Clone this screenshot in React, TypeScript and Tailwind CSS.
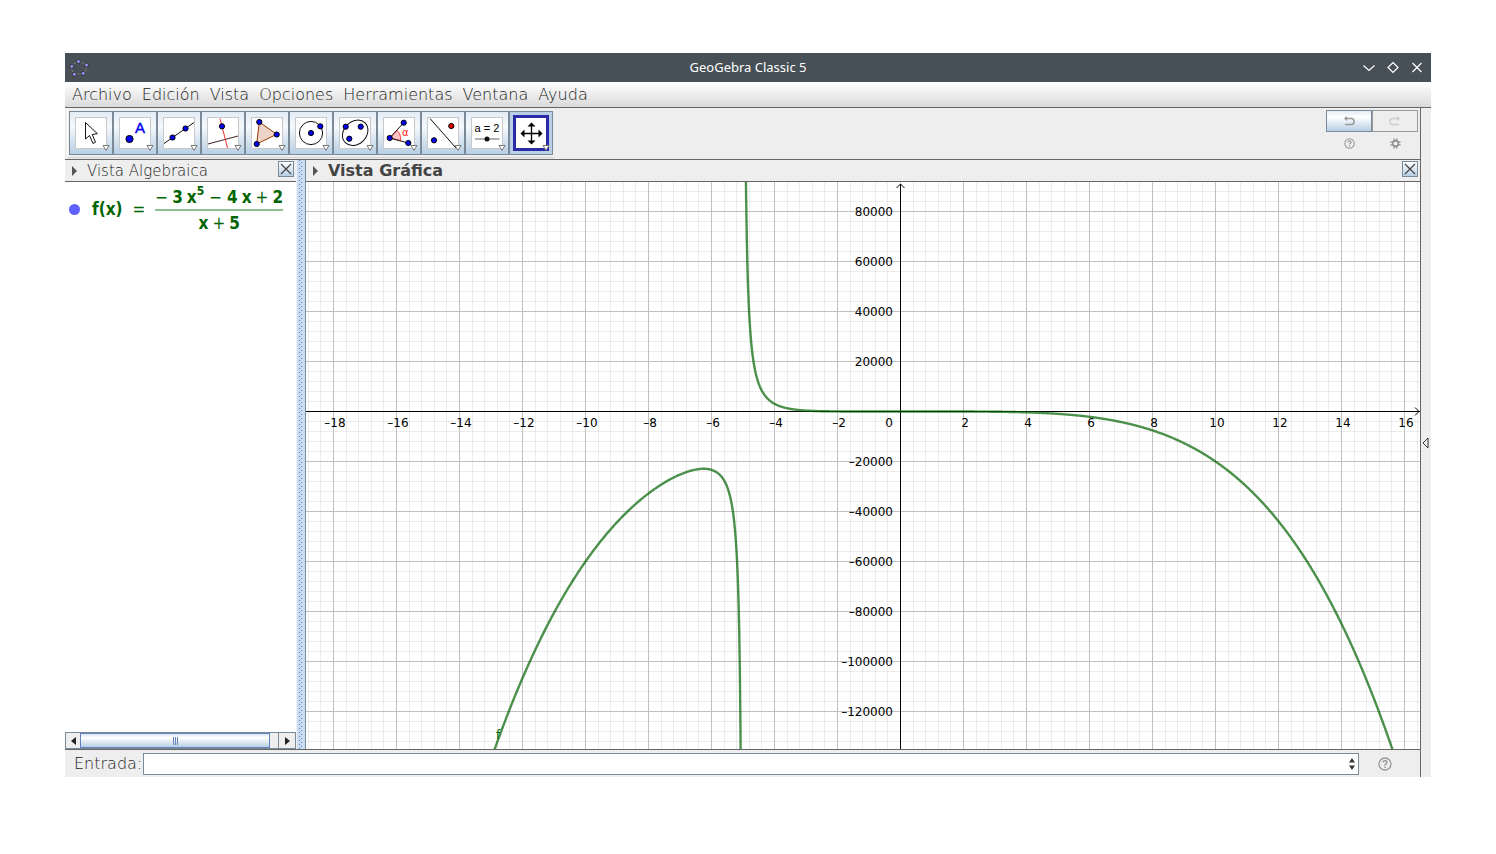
import type { ReactNode } from "react";

const MENUS = ["Archivo", "Edición", "Vista", "Opciones", "Herramientas", "Ventana", "Ayuda"];

// Plot scale: pixels per unit, and where the origin sits inside the view
const UNIT_X = 31.5;
const UNIT_Y = 50 / 20000;
const ORIGIN_X = 594.5;
const ORIGIN_Y = 229.5;
const PLOT_HEIGHT = 567;

const f = (x: number) => (-3 * x ** 5 - 4 * x + 2) / (x + 5);

function range(from: number, to: number, step = 1) {
  const out: number[] = [];
  for (let i = from; i <= to; i += step) out.push(i);
  return out;
}

function curve(from: number, to: number) {
  const points: string[] = [];
  const steps = Math.round((to - from) / 0.02);
  for (let i = 0; i <= steps; i++) {
    const x = from + ((to - from) * i) / steps;
    const y = ORIGIN_Y - f(x) * UNIT_Y;
    if (y > -400 && y < PLOT_HEIGHT + 400) {
      points.push(`${(ORIGIN_X + x * UNIT_X).toFixed(2)},${y.toFixed(2)}`);
    }
  }
  return points.join(" ");
}

const xTicks = range(-18, 16, 2);
const yTicks = range(-120000, 80000, 20000);
const label = (n: number) => (n < 0 ? `–${-n}` : `${n}`);

function Dot({ x, y, r = 2.6, color = "#0000f5" }: { x: number; y: number; r?: number; color?: string }) {
  return <circle cx={x} cy={y} r={r} fill={color} stroke="#000" strokeWidth="1" />;
}

const TOOLS: { name: string; icon: ReactNode }[] = [
  {
    name: "Elige y mueve",
    icon: <path d="M16.5 11.5V28l4-3.5 3.5 8 2.5-1.3-3.3-7.7 5.2-.8z" fill="#fff" stroke="#111" />,
  },
  {
    name: "Punto",
    icon: (
      <>
        <Dot x={16.5} y={28} r={3.6} />
        <text x="22" y="21.5" fontSize="15" fill="#0000f0" stroke="#0000f0" strokeWidth="0.4" className="font-['Liberation_Sans',sans-serif]">A</text>
      </>
    ),
  },
  {
    name: "Recta",
    icon: (
      <>
        <path d="M7 32.5L37 11.5" stroke="#111" />
        <Dot x={15.5} y={26.5} />
        <Dot x={28.5} y={17.5} />
      </>
    ),
  },
  {
    name: "Perpendicular",
    icon: (
      <>
        <path d="M7 33L37 25" stroke="#402020" />
        <path d="M19 7.5L26.5 37" stroke="#f03030" />
        <Dot x={21} y={15.3} />
      </>
    ),
  },
  {
    name: "Polígono",
    icon: (
      <>
        <path d="M14.3 11L31.7 23.3L11.7 33z" fill="#ecd5c8" stroke="#993300" />
        <Dot x={14.3} y={11} />
        <Dot x={31.7} y={23.5} />
        <Dot x={11.7} y={33} />
      </>
    ),
  },
  {
    name: "Circunferencia",
    icon: (
      <>
        <circle cx="22" cy="22" r="11.6" fill="none" stroke="#111" />
        <Dot x={22} y={22} />
        <Dot x={31.3} y={15.3} />
      </>
    ),
  },
  {
    name: "Elipse",
    icon: (
      <>
        <ellipse cx="22.2" cy="21.8" rx="14" ry="11.3" transform="rotate(-45 22.2 21.8)" fill="none" stroke="#111" />
        <Dot x={12.7} y={15.7} />
        <Dot x={27.7} y={15.7} />
        <Dot x={16.3} y={27.7} />
      </>
    ),
  },
  {
    name: "Ángulo",
    icon: (
      <>
        <path d="M12.7 27L20 19.5Q24 23 23.7 29.7z" fill="#ffc4c4" stroke="#ff4040" />
        <path d="M26.7 11.7L12.7 27L31.3 32" fill="none" stroke="#111" />
        <Dot x={12.7} y={27} />
        <Dot x={26.7} y={11.7} />
        <Dot x={31.3} y={32} />
        <text x="25" y="25" fontSize="10" fill="#ff2020" className="font-['DejaVu_Sans',sans-serif]">α</text>
      </>
    ),
  },
  {
    name: "Simetría axial",
    icon: (
      <>
        <path d="M9 7.5L35 37" stroke="#111" />
        <Dot x={13} y={29.3} />
        <Dot x={30.3} y={15} color="#e00000" />
      </>
    ),
  },
  {
    name: "Deslizador",
    icon: (
      <>
        <text x="22" y="21" fontSize="11" textAnchor="middle" fill="#000" className="font-['Liberation_Sans',sans-serif]">a = 2</text>
        <path d="M10 28H34.5" stroke="#666" />
        <circle cx="22" cy="28" r="2.5" fill="#111" />
      </>
    ),
  },
  {
    name: "Desplaza vista gráfica",
    icon: (
      <>
        <path d="M13 22.5H32M22.5 13V32" stroke="#000" strokeWidth="1.3" />
        <path d="M22.5 11.5l4 4h-8zM22.5 33.5l4-4h-8zM11.5 22.5l4-4v8zM33.5 22.5l-4-4v8z" fill="#000" />
      </>
    ),
  },
];

function ToolButton({ name, icon, active }: { name: string; icon: ReactNode; active: boolean }) {
  return (
    <button
      type="button"
      aria-label={name}
      aria-pressed={active}
      className={`size-11 border border-[#7a8a99] ${active ? "bg-[#b8cfe5]" : "bg-linear-to-b from-[#e2ecf5] via-[#f6f9fc] via-35% to-[#b8cfe5]"}`}
    >
      <svg viewBox="1 1 42 42" className="size-full">
        {active ? (
          <rect x="5.5" y="5.5" width="33" height="33" fill="#fff" stroke="#2b2ba8" strokeWidth="3" />
        ) : (
          <rect x="6.5" y="6.5" width="31" height="31" fill="#fff" stroke="#c8c8c8" />
        )}
        {icon}
        <path d="M34 34.5h6l-3 5z" fill="#fff" stroke="#777" />
      </svg>
    </button>
  );
}

function PanelHeader({ title, bold = false }: { title: string; bold?: boolean }) {
  return (
    <header className="flex h-[22px] items-center border-b border-[#666] bg-[#eee] pl-[7px] pr-[2px]">
      <svg viewBox="0 0 6 10" className="h-[10px] w-[6px]">
        <path d="M0 0v10l5-5z" fill="#555" />
      </svg>
      <h2 className={`flex-1 pl-[9px] leading-5 ${bold ? "text-[16px] font-bold text-[#444]" : "text-[15px] font-extralight text-[#222]"}`}>{title}</h2>
      <button type="button" aria-label={`Cerrar ${title}`} className="mt-px size-4 self-start border border-[#7a8a99] bg-linear-to-b from-white to-[#b8cfe5]">
        <svg viewBox="0 0 14 14" className="size-full">
          <path d="M2 2l10 10M12 2L2 12" stroke="#444" strokeWidth="1.2" />
        </svg>
      </button>
    </header>
  );
}

function HelpIcon({ className }: { className: string }) {
  return (
    <svg viewBox="0 0 14 14" className={className} fill="none" stroke="#999">
      <circle cx="7" cy="7" r="6" strokeWidth="1.3" />
      <path d="M5 5.4c.2-2.4 4-2.2 4 0 0 1.5-2 1.5-2 3" strokeWidth="1.5" />
      <path d="M7 9.5V11" strokeWidth="1.5" />
    </svg>
  );
}

function AlgebraPanel() {
  return (
    <section className="flex w-[231px] shrink-0 flex-col bg-white">
      <PanelHeader title="Vista Algebraica" />
      <div className="flex flex-1 items-start pl-1 pt-[3px]">
        <span className="mt-[19px] size-[11px] shrink-0 rounded-full bg-[#6060ff]" />
        <div className="flex items-center pl-3 font-['DejaVu_Sans_Condensed','DejaVu_Sans',sans-serif] text-[17px] font-bold text-[#006400]">
          <span>f(x)</span>
          <span className="px-[10px] font-normal">=</span>
          <span className="flex flex-col whitespace-nowrap leading-6">
            <span className="flex h-[26px] justify-center gap-1 border-b-2 border-[#8fbf8f]">
              <span className="font-normal">−</span>
              <span>3</span>
              <span>x<sup className="-top-2 text-[12px]">5</sup></span>
              <span className="px-px font-normal">−</span>
              <span>4</span>
              <span>x</span>
              <span className="font-normal">+</span>
              <span>2</span>
            </span>
            <span className="flex justify-center gap-1">
              <span>x</span>
              <span className="font-normal">+</span>
              <span>5</span>
            </span>
          </span>
        </div>
      </div>
      <div className="flex h-[17px] border border-[#7a8a99] bg-[#eee]">
        <button type="button" aria-label="Izquierda" className="flex w-[14px] items-center justify-center">
          <svg viewBox="0 0 5 8" className="h-2 w-[5px]"><path d="M5 0v8L0 4z" fill="#222" /></svg>
        </button>
        <div className="flex flex-1 items-center justify-center gap-px border border-[#6382bf] bg-linear-to-b from-[#dce8f4] via-white via-30% to-[#b8cfe5]">
          <span className="h-2 w-px bg-[#6382bf]" />
          <span className="h-2 w-px bg-[#6382bf]" />
          <span className="h-2 w-px bg-[#6382bf]" />
        </div>
        <span className="w-[9px] border-r border-[#7a8a99]" />
        <button type="button" aria-label="Derecha" className="flex w-4 items-center justify-center">
          <svg viewBox="0 0 5 8" className="h-2 w-[5px]"><path d="M0 0v8l5-4z" fill="#222" /></svg>
        </button>
      </div>
    </section>
  );
}

function Plot() {
  return (
    <svg className="block h-[567px] w-full bg-white font-['DejaVu_Sans',sans-serif] text-[12px]">
      {/* Rejilla */}
      <g stroke="#000" strokeOpacity="0.07" shapeRendering="crispEdges">
        {range(-47, 150).map((i) => (
          <line key={i} x1={ORIGIN_X + i * 12.6} x2={ORIGIN_X + i * 12.6} y1="0" y2="100%" />
        ))}
        {range(-22, 33).map((i) => (
          <line key={i} x1="0" x2="100%" y1={ORIGIN_Y + i * 10} y2={ORIGIN_Y + i * 10} />
        ))}
      </g>
      <g stroke="#c0c0c0" shapeRendering="crispEdges">
        {xTicks.map((t) => (
          <line key={t} x1={ORIGIN_X + t * UNIT_X} x2={ORIGIN_X + t * UNIT_X} y1="0" y2="100%" />
        ))}
        {yTicks.map((t) => (
          <line key={t} x1="0" x2="100%" y1={ORIGIN_Y - t * UNIT_Y} y2={ORIGIN_Y - t * UNIT_Y} />
        ))}
      </g>

      {/* Ejes */}
      <g stroke="#000" fill="none">
        <line x1="0" x2="100%" y1={ORIGIN_Y} y2={ORIGIN_Y} />
        <line x1={ORIGIN_X} x2={ORIGIN_X} y1="2" y2="100%" />
        <path d="M590.5 6l4-4 4 4" />
        <svg x="100%" y={ORIGIN_Y} overflow="visible">
          <path d="M-5 -4l4 4-4 4" />
        </svg>
      </g>
      <g fill="#000" textAnchor="middle">
        {xTicks.filter((t) => t !== 0).map((t) => (
          <text key={t} x={ORIGIN_X + t * UNIT_X + 1.5} y="245">{label(t)}</text>
        ))}
      </g>
      <g fill="#000" textAnchor="end">
        <text x="587" y="245">0</text>
        {yTicks.filter((t) => t !== 0).map((t) => (
          <text key={t} x="587" y={ORIGIN_Y - t * UNIT_Y + 4.5}>{label(t)}</text>
        ))}
      </g>

      <g fill="none" stroke="#006400" strokeOpacity="0.7" strokeWidth="2.4" strokeLinejoin="round">
        <polyline points={curve(-14, -5.02)} />
        <polyline points={curve(-4.98, 18)} />
      </g>
      <text x="190" y="557" fill="#006400">f</text>
    </svg>
  );
}

export default function App() {
  return (
    <main className="min-h-screen bg-white px-[65px] py-[53px] font-['DejaVu_Sans',sans-serif] text-[#222]">
      <div className="bg-[#eee]">
        {/* Barra de título */}
        <div className="flex h-[29px] items-center justify-between bg-[#475057] px-1">
          <svg viewBox="0 0 20 20" className="h-5 w-20" preserveAspectRatio="xMinYMid">
            <ellipse cx="10" cy="10" rx="7.5" ry="6" fill="none" stroke="#6c6c6c" strokeWidth="1.2" />
            <g fill="#9999ff" stroke="#222" strokeWidth="0.8">
              <circle cx="9.5" cy="3.5" r="1.9" />
              <circle cx="17.5" cy="7" r="1.9" />
              <circle cx="14.3" cy="15.3" r="1.9" />
              <circle cx="5.3" cy="16.3" r="1.9" />
              <circle cx="2.8" cy="8.5" r="1.9" />
            </g>
          </svg>
          <h1 className="font-['Noto_Sans',sans-serif] text-[13px] text-white">GeoGebra Classic 5</h1>
          <div className="flex w-20 justify-end gap-2 pr-[2px]">
            <button type="button" aria-label="Minimizar" className="size-4">
              <svg viewBox="0 0 16 16" fill="none" stroke="#fff" strokeWidth="1.2"><path d="M2.5 5.5l5.5 5 5.5-5" /></svg>
            </button>
            <button type="button" aria-label="Maximizar" className="size-4">
              <svg viewBox="0 0 16 16" fill="none" stroke="#fff" strokeWidth="1.2"><path d="M8 2.5L13 7.5 8 12.5 3 7.5z" /></svg>
            </button>
            <button type="button" aria-label="Cerrar" className="size-4">
              <svg viewBox="0 0 16 16" fill="none" stroke="#fff" strokeWidth="1.2"><path d="M3.5 3l9 9M12.5 3l-9 9" /></svg>
            </button>
          </div>
        </div>

        {/* Menú */}
        <nav className="flex h-[26px] items-center gap-[10px] border-b border-[#666] bg-linear-to-b from-white to-[#dadada] px-[7px] text-[16px] font-extralight">
          {MENUS.map((m) => (
            <button key={m} type="button">{m}</button>
          ))}
        </nav>

        <div className="flex">
          <div className="min-w-0 flex-1">
            {/* Herramientas */}
            <div className="flex h-[52px] items-start justify-between border-b border-[#666] px-[2px]">
              <div className="flex border-b border-l border-b-[#d4d4d4] border-l-white pb-[2px] pl-px pr-[2px] pt-[3px]">
                {TOOLS.map((t, i) => (
                  <ToolButton key={t.name} name={t.name} icon={t.icon} active={i === TOOLS.length - 1} />
                ))}
              </div>
              <div className="grid grid-cols-2 pt-[2px]">
                <button type="button" aria-label="Deshacer" className="flex h-[22px] w-[46px] items-center justify-center border border-[#7a8a99] bg-linear-to-b from-[#e2ecf5] via-white via-30% to-[#b8cfe5]">
                  <svg viewBox="0 0 12 10" className="h-[10px] w-3" fill="none" stroke="#999" strokeWidth="1.5">
                    <path d="M2 2.5h6.5q2.5 0 2.5 3t-2.5 3H2" />
                    <path d="M4 0v5L1 2.5z" fill="#999" stroke="none" />
                  </svg>
                </button>
                <button type="button" disabled aria-label="Rehacer" className="flex h-[22px] w-[46px] items-center justify-center border border-[#999]">
                  <svg viewBox="0 0 12 10" className="h-[10px] w-3" fill="none" stroke="#ccc" strokeWidth="1.5">
                    <path d="M10 2.5H3.5Q1 2.5 1 5.5t2.5 3H10" />
                    <path d="M8 0v5l3-2.5z" fill="#ccc" stroke="none" />
                  </svg>
                </button>
                <button type="button" aria-label="Ayuda" className="flex h-[22px] items-center justify-center">
                  <HelpIcon className="size-[11px]" />
                </button>
                <button type="button" aria-label="Configuración" className="flex h-[22px] items-center justify-center">
                  <svg viewBox="0 0 12 12" className="size-[11px]" fill="none" stroke="#888" strokeWidth="1.4">
                    <circle cx="6" cy="6" r="3" />
                    <path d="M4.5.5v2.8M7.5.5v2.8M4.5 8.7v2.8M7.5 8.7v2.8M.5 4.5h2.8M.5 7.5h2.8M8.7 4.5h2.8M8.7 7.5h2.8" />
                  </svg>
                </button>
              </div>
            </div>

            {/* Vistas */}
            <div className="flex border-b border-[#666]">
              <AlgebraPanel />
              <div className="w-[10px] shrink-0 border-l border-r border-l-[#eee] border-r-[#7a8a99] bg-[#c8ddf2]">
                <svg className="h-full w-full">
                  <defs>
                    <pattern id="grip" x="2" width="4" height="4" patternUnits="userSpaceOnUse">
                      <rect width="1" height="1" fill="#6382bf" />
                      <rect x="2" y="2" width="1" height="1" fill="#6382bf" />
                    </pattern>
                  </defs>
                  <rect x="2" width="4" height="100%" fill="url(#grip)" />
                </svg>
              </div>
              <section className="min-w-0 flex-1">
                <PanelHeader title="Vista Gráfica" bold />
                <Plot />
              </section>
            </div>

            {/* Entrada */}
            <form className="flex h-[27px] items-center pl-[9px]">
              <label htmlFor="entrada" className="text-[16px] font-extralight">Entrada:</label>
              <div className="ml-px flex h-[22px] flex-1 items-center border border-[#7a8a99] bg-white pr-[3px]">
                <input id="entrada" type="text" className="h-full min-w-0 flex-1 px-1 text-[16px] outline-none" />
                <button type="button" aria-label="Historial">
                  <svg viewBox="0 0 6 12" className="h-3 w-[6px]"><path d="M3 0l3 4.5H0zM3 12l3-4.5H0z" fill="#333" /></svg>
                </button>
              </div>
              <button type="button" aria-label="Ayuda de entrada" className="ml-[19px] mr-7">
                <HelpIcon className="size-[14px]" />
              </button>
            </form>
          </div>

          <aside className="flex w-[11px] items-center justify-end border-l border-[#666] pr-[2px]">
            <button type="button" aria-label="Mostrar panel">
              <svg viewBox="0 0 7 12" className="h-3 w-[7px]" fill="none" stroke="#333"><path d="M6 1v10L1 6z" /></svg>
            </button>
          </aside>
        </div>
      </div>
    </main>
  );
}
